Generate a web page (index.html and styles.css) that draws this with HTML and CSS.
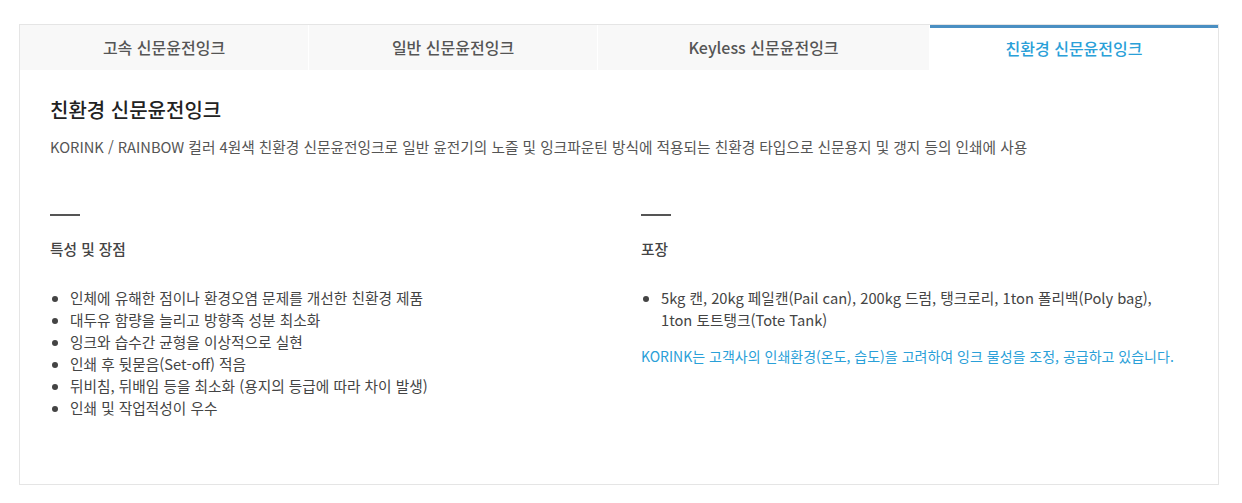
FILE: index.html
```html
<!DOCTYPE html>
<html lang="ko">
<head>
    <meta charset="UTF-8">
    <meta name="viewport" content="width=device-width, initial-scale=1.0">
    <title>신문윤전잉크</title>
    <link rel="stylesheet" href="styles.css">
</head>
<body>
    <div class="product-box">
        <ul class="tabs">
            <li>고속 신문윤전잉크</li>
            <li>일반 신문윤전잉크</li>
            <li>Keyless 신문윤전잉크</li>
            <li class="active">친환경 신문윤전잉크</li>
        </ul>

        <div class="tab-content">
            <h2>친환경 신문윤전잉크</h2>
            <p class="desc">KORINK / RAINBOW 컬러 4원색 친환경 신문윤전잉크로 일반 윤전기의 노즐 및 잉크파운틴 방식에 적용되는 친환경 타입으로 신문용지 및 갱지 등의 인쇄에 사용</p>

            <div class="info">
                <div class="info-col">
                    <h3>특성 및 장점</h3>
                    <ul>
                        <li>인체에 유해한 점이나 환경오염 문제를 개선한 친환경 제품</li>
                        <li>대두유 함량을 늘리고 방향족 성분 최소화</li>
                        <li>잉크와 습수간 균형을 이상적으로 실현</li>
                        <li>인쇄 후 뒷묻음(Set-off) 적음</li>
                        <li>뒤비침, 뒤배임 등을 최소화 (용지의 등급에 따라 차이 발생)</li>
                        <li>인쇄 및 작업적성이 우수</li>
                    </ul>
                </div>
                <div class="info-col">
                    <h3>포장</h3>
                    <ul>
                        <li>5kg 캔, 20kg 페일캔(Pail can), 200kg 드럼, 탱크로리, 1ton 폴리백(Poly bag), 1ton 토트탱크(Tote Tank)</li>
                    </ul>
                    <p class="note">KORINK는 고객사의 인쇄환경(온도, 습도)을 고려하여 잉크 물성을 조정, 공급하고 있습니다.</p>
                </div>
            </div>
        </div>
    </div>
</body>
</html>
```

FILE: styles.css
```css
body {
    font-family: "Noto Sans CJK KR", "Noto Sans", sans-serif;
    margin: 0;
    padding: 0;
    background-color: #fff;
    color: #444;
}
.product-box {
    width: 1198px;
    margin: 24px 0 0 19px;
    border: 1px solid #e5e5e5;
}
.tabs {
    display: grid;
    grid-template-columns: 288px 288px 331px 1fr;
    gap: 1px;
    margin: 0;
    padding: 0;
    list-style: none;
}
.tabs li {
    height: 45px;
    line-height: 45px;
    text-align: center;
    font-size: 16px;
    font-weight: 500;
    color: #555;
    background-color: #f8f8f8;
}
.tabs li.active {
    background-color: #fff;
    color: #2aa0d8;
    border-top: 3px solid #4a8fc2;
    line-height: 41px;
    height: 42px;
}
.tab-content {
    padding: 27px 30px 65px;
}
.tab-content h2 {
    margin: 0;
    font-size: 20px;
    font-weight: 500;
    line-height: 26px;
    color: #222;
}
.desc {
    margin: 13px 0 0;
    font-size: 14.7px;
    line-height: 22px;
    color: #555;
}
.info {
    display: grid;
    grid-template-columns: 591px 1fr;
    margin-top: 56px;
    padding-right: 10px;
}
.info-col h3 {
    margin: 0;
    padding-top: 22px;
    border-top: 2px solid #555;
    width: 30px;
    white-space: nowrap;
    font-size: 14.7px;
    font-weight: 500;
    line-height: 22px;
    color: #444;
}
.info-col ul {
    margin: 27px 0 0;
    padding-left: 20px;
    font-size: 14.7px;
    line-height: 22px;
    color: #444;
}
.note {
    margin: 14px 0 0;
    font-size: 14px;
    line-height: 22px;
    color: #2aa0d8;
}
```
